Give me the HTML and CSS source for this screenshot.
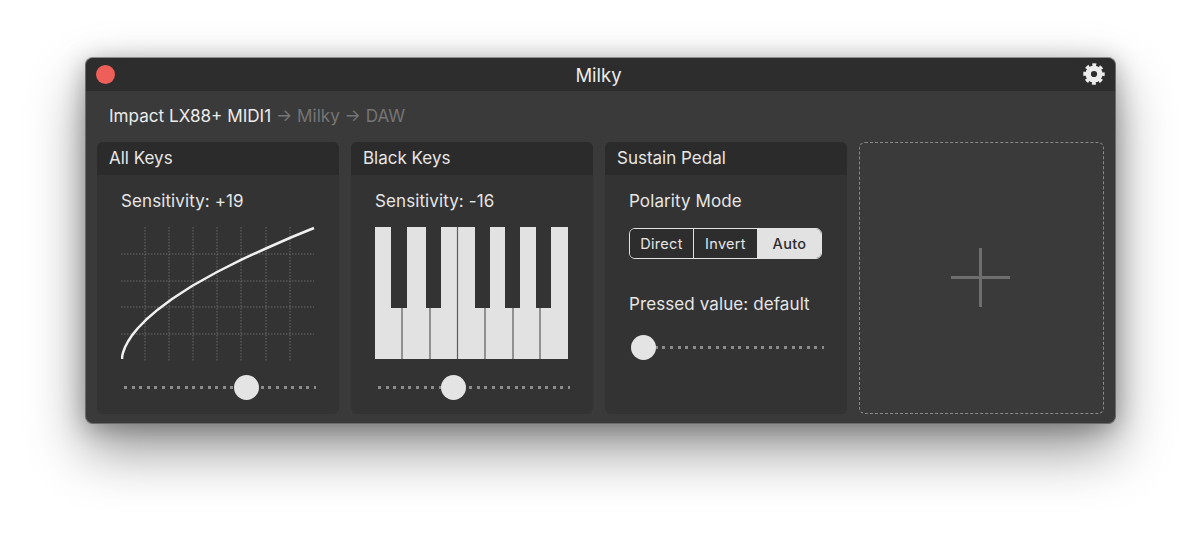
FILE: index.html
```html
<!DOCTYPE html>
<html lang="en">
<head>
    <meta charset="UTF-8">
    <title>Milky</title>
    <link rel="stylesheet" href="styles.css">
</head>
<body>
    <div class="window">
        <div class="titlebar">
            <span class="close-btn"></span>
            <span class="title">Milky</span>
            <svg class="gear" width="22" height="22" viewBox="0 0 24 24">
                <circle cx="12" cy="12" r="6.4" fill="none" stroke="#ececec" stroke-width="6"/>
                <circle cx="12" cy="12" r="10" fill="none" stroke="#ececec" stroke-width="3.4" stroke-dasharray="4.2 3.654" stroke-dashoffset="2.1"/>
            </svg>
        </div>

        <div class="route">Impact LX88+ MIDI1 <span class="route-dim">→ Milky → DAW</span></div>

        <div class="panels">
            <div class="panel">
                <div class="panel-header">All Keys</div>
                <div class="panel-body">
                    <div class="label">Sensitivity: +19</div>
                    <svg class="graph" width="196" height="136" viewBox="0 0 196 136">
                        <g class="grid">
                            <path d="M24 2V136M48 2V136M72 2V136M96 2V136M120 2V136M145 2V136M169 2V136"/>
                            <path d="M0 29H193M0 56H193M0 82H193M0 109H193"/>
                        </g>
                        <polyline class="curve" points="1,134 1.2,131 2,127.800 4,122.300 7,116.500 11,110.400 17,103 25,94.800 37,84.400 51,74 71,61 96,47 121,34.300 146,23 171,12 193,3"/>
                    </svg>
                    <div class="slider">
                        <span class="thumb" style="left: 122px"></span>
                    </div>
                </div>
            </div>

            <div class="panel">
                <div class="panel-header">Black Keys</div>
                <div class="panel-body">
                    <div class="label">Sensitivity: -16</div>
                    <svg class="graph" width="196" height="136" viewBox="0 0 196 136">
                        <rect x="0" y="2" width="193" height="132" fill="#e2e2e2"/>
                        <g fill="#333333">
                            <rect x="16" y="2" width="16" height="81"/>
                            <rect x="51" y="2" width="15" height="81"/>
                            <rect x="100" y="2" width="15" height="81"/>
                            <rect x="130" y="2" width="15" height="81"/>
                            <rect x="161" y="2" width="15" height="81"/>
                        </g>
                        <path class="key-lines" d="M27 83V134M55 83V134M82.500 2V134M110 83V134M138 83V134M165 83V134"/>
                    </svg>
                    <div class="slider">
                        <span class="thumb" style="left: 75px"></span>
                    </div>
                </div>
            </div>

            <div class="panel">
                <div class="panel-header">Sustain Pedal</div>
                <div class="panel-body">
                    <div class="label">Polarity Mode</div>
                    <div class="segmented">
                        <span class="segment">Direct</span>
                        <span class="segment">Invert</span>
                        <span class="segment segment-on">Auto</span>
                    </div>
                    <div class="label label-pressed">Pressed value: default</div>
                    <div class="slider slider-pressed">
                        <span class="thumb" style="left: 11px"></span>
                    </div>
                </div>
            </div>

            <div class="add-tile"><span class="plus"></span></div>
        </div>
    </div>
</body>
</html>
```

FILE: styles.css
```css
body {
    margin: 0;
    height: 535px;
    padding: 57px 0 0 85px;
    box-sizing: border-box;
    overflow: hidden;
    background: #ffffff;
    font-family: 'Inter', 'Liberation Sans', sans-serif;
    color: #e6e6e6;
}

.window {
    width: 1031px;
    height: 367px;
    box-sizing: border-box;
    background: #3a3a3a;
    border-radius: 8px;
    border: 1px solid #6a6a6a;
    border-top-color: #8c8c8c;
    box-shadow: 0 26px 56px rgba(0, 0, 0, 0.42), 0 4px 24px rgba(0, 0, 0, 0.28);
}

.titlebar {
    position: relative;
    height: 33px;
    display: flex;
    align-items: center;
    justify-content: center;
    background: #2d2d2d;
    border-radius: 7px 7px 0 0;
}

.title {
    font-size: 18.500px;
    color: #ececec;
    margin-right: 4px;
}

.close-btn {
    position: absolute;
    left: 10px;
    top: 7px;
    width: 19px;
    height: 19px;
    border-radius: 50%;
    background: #ed5f58;
}

.gear {
    position: absolute;
    right: 10px;
    top: 5px;
}

.route {
    height: 51px;
    padding-left: 23px;
    line-height: 50px;
    font-size: 17.100px;
    color: #ececec;
}

.route-dim {
    color: #757575;
}

.panels {
    display: flex;
    gap: 12px;
    padding-left: 11px;
}

.panel {
    width: 242px;
    height: 272px;
    background: #333333;
    border-radius: 6px;
}

.panel-header {
    height: 33px;
    padding-left: 12px;
    line-height: 33px;
    font-size: 17px;
    background: #2b2b2b;
    border-radius: 6px 6px 0 0;
}

.panel-body {
    padding: 16px 0 0 24px;
}

.label {
    height: 21px;
    line-height: 21px;
    font-size: 17px;
    letter-spacing: 0.100px;
}

.graph {
    display: block;
    margin-top: 13px;
}

.grid path {
    fill: none;
    stroke: #6a6a6a;
    stroke-width: 1;
    stroke-dasharray: 1.500 1.500;
}

.curve {
    fill: none;
    stroke: #f0f0f0;
    stroke-width: 2.500;
    stroke-linejoin: round;
}

.key-lines {
    fill: none;
    stroke: #5c5c5c;
    stroke-width: 1.200;
}

.slider {
    position: relative;
    width: 192px;
    height: 3px;
    margin: 25px 0 0 3px;
    background: repeating-linear-gradient(to right, #8c8c8c 0 3px, transparent 3px 7.600px);
}

.slider-pressed {
    margin-top: 31px;
}

.thumb {
    position: absolute;
    top: -11px;
    width: 25px;
    height: 25px;
    margin-left: -12.500px;
    border-radius: 50%;
    background: #e4e4e4;
}

.segmented {
    display: flex;
    width: 193px;
    height: 31px;
    margin-top: 16px;
    box-sizing: border-box;
    border: 1.500px solid #e2e2e2;
    border-radius: 6px;
    overflow: hidden;
    font-size: 14.500px;
    letter-spacing: 0.300px;
}

.segment {
    flex: 0 0 64px;
    display: flex;
    align-items: center;
    justify-content: center;
    box-sizing: border-box;
    border-right: 1.500px solid #e2e2e2;
    background: #2d2d2d;
}

.segment-on {
    flex: 1;
    border-right: none;
    background: #e2e2e2;
    color: #2d2d2d;
    font-weight: 500;
}

.label-pressed {
    margin-top: 35px;
}

.add-tile {
    width: 245px;
    height: 272px;
    box-sizing: border-box;
    border: 1px dashed #8a8a8a;
    border-radius: 6px;
    display: flex;
    align-items: center;
    justify-content: center;
}

.plus {
    position: relative;
    width: 59px;
    height: 3px;
    margin: 0 3px 2px 0;
    background: #6e6e6e;
}

.plus:before {
    content: '';
    position: absolute;
    left: 28px;
    top: -28px;
    width: 3px;
    height: 59px;
    background: #6e6e6e;
}
```
